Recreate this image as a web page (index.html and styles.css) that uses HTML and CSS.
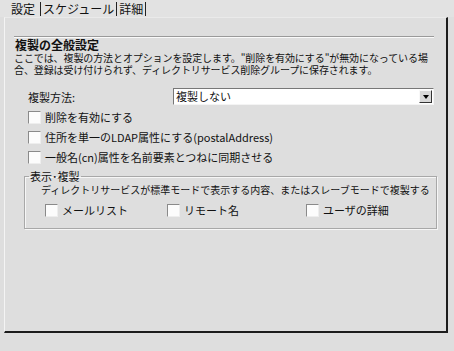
FILE: index.html
```html
<!DOCTYPE html>
<html lang="ja">
<head>
<meta charset="UTF-8" />
<title>複製の全般設定</title>
<link rel="stylesheet" href="styles.css">
</head>
<body>
<nav class="tabs">
  <span class="tab active">設定</span><span class="sep"></span><span class="tab">スケジュール</span><span class="sep"></span><span class="tab">詳細</span><span class="sep"></span>
</nav>

<main class="panel">
  <hr class="rule" />
  <h2 class="title">複製の全般設定</h2>
  <p class="desc">ここでは、複製の方法とオプションを設定します。"削除を有効にする"が無効になっている場合、登録は受け付けられず、ディレクトリサービス削除グループに保存されます。</p>

  <div class="method-row">
    <span class="method-label">複製方法:</span>
    <div class="select">
      <span class="select-value">複製しない</span>
      <span class="select-btn"><span class="arrow"></span></span>
    </div>
  </div>

  <div class="checks">
    <label class="check"><span class="cb"></span>削除を有効にする</label>
    <label class="check"><span class="cb"></span>住所を単一のLDAP属性にする(postalAddress)</label>
    <label class="check"><span class="cb"></span>一般名(cn)属性を名前要素とつねに同期させる</label>
  </div>

  <fieldset class="group">
    <legend>表示･複製</legend>
    <p class="group-desc">ディレクトリサービスが標準モードで表示する内容、またはスレーブモードで複製する</p>
    <div class="group-checks">
      <label class="check first"><span class="cb"></span>メールリスト</label>
      <label class="check second"><span class="cb"></span>リモート名</label>
      <label class="check third"><span class="cb"></span>ユーザの詳細</label>
    </div>
  </fieldset>
</main>
</body>
</html>
```

FILE: styles.css
```css
/* Base */
* {
  box-sizing: border-box;
}
body {
  margin: 0;
  width: 454px;
  height: 351px;
  overflow: hidden;
  background: #dedede;
  color: #111;
  font-family: "Noto Sans CJK JP", "DejaVu Sans", sans-serif;
  font-size: 11px;
}

/* Tabs */
.tabs {
  height: 17px;
  padding-left: 10px;
  display: flex;
  align-items: center;
  font-size: 12px;
  background: #e2e2e2;
}
.tab {
  line-height: 17px;
  padding: 0 1px;
}
.tab.active {
  padding-right: 4px;
}
.sep {
  width: 1px;
  height: 14px;
  background: #222;
  margin: 0 1px;
}

/* Panel */
.panel {
  margin: 0 6px 0 4px;
  height: 316px;
  padding: 18px 12px 0 9px;
  border-left: 1px solid #f4f4f4;
  border-top: 1px solid #eaeaea;
  border-right: 2px solid #1c1c1c;
  border-bottom: 2px solid #1c1c1c;
  background: #dedede;
}
.rule {
  margin: 0;
  height: 2px;
  border: none;
  border-top: 1px solid #9a9a9a;
  border-bottom: 1px solid #fafafa;
}
.title {
  margin: 0 0 0 1px;
  font-size: 12px;
  font-weight: 700;
  line-height: 13px;
}
.desc {
  margin: 1px 0 0 0;
  font-size: 10px;
  line-height: 12px;
  letter-spacing: -0.1px;
}

/* Method row */
.method-row {
  display: flex;
  align-items: center;
  margin: 12px 0 0 14px;
  height: 17px;
}
.method-label {
  width: 145px;
}
.select {
  width: 261px;
  height: 17px;
  display: flex;
  align-items: center;
  background: #fff;
  border-top: 1px solid #777;
  border-left: 1px solid #777;
  border-right: 1px solid #f4f4f4;
  border-bottom: 1px solid #f4f4f4;
}
.select-value {
  flex: 1;
  padding-left: 2px;
  line-height: 15px;
}
.select-btn {
  width: 13px;
  height: 13px;
  margin-right: 1px;
  background: #d8d8d8;
  border-top: 1px solid #f8f8f8;
  border-left: 1px solid #f8f8f8;
  border-right: 1px solid #333;
  border-bottom: 1px solid #333;
  display: flex;
  align-items: center;
  justify-content: center;
}
.arrow {
  width: 0;
  height: 0;
  border-left: 3.5px solid transparent;
  border-right: 3.5px solid transparent;
  border-top: 4px solid #000;
}

/* Checkboxes */
.checks {
  margin: 2px 0 0 14px;
  display: flex;
  flex-direction: column;
}
.check {
  display: flex;
  align-items: center;
  height: 20px;
  gap: 4px;
}
.cb {
  width: 13px;
  height: 13px;
  background: #fcfcfc;
  border-top: 1px solid #8a8a8a;
  border-left: 1px solid #8a8a8a;
  border-right: 1px solid #eee;
  border-bottom: 1px solid #eee;
}

/* Group box */
.group {
  margin: 3px 0 0 10px;
  width: 413px;
  height: 59px;
  padding: 0 0 0 16px;
  border: 1px solid #a8a8a8;
  box-shadow: inset 1px 1px 0 #f6f6f6, 1px 1px 0 #f6f6f6;
}
.group legend {
  padding: 0 1px;
  margin-left: -12px;
  line-height: 12px;
}
.group-desc {
  margin: 2px 0 0 0;
  font-size: 10px;
  line-height: 12px;
}
.group-checks {
  display: flex;
  margin: 5px 0 0 4px;
}
.group-checks .check {
  height: 18px;
}
.group-checks .first {
  width: 122px;
}
.group-checks .second {
  width: 139px;
}
```
